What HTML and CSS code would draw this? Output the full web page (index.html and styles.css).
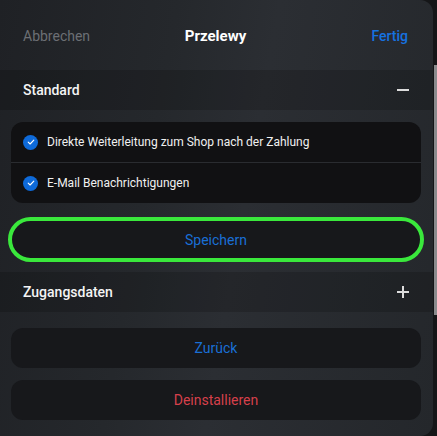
FILE: index.html
```html
<!DOCTYPE html>
<html lang="de">
<head>
    <meta charset="UTF-8">
    <meta name="viewport" content="width=device-width, initial-scale=1.0">
    <title>Przelewy</title>
    <link rel="stylesheet" href="styles.css">
</head>
<body>

    <div class="screen">
        <div class="sheet">
            <header class="sheet-header">
                <a href="#" class="link-cancel">Abbrechen</a>
                <h1>Przelewy</h1>
                <a href="#" class="link-done">Fertig</a>
            </header>

            <div class="group-head">
                <span>Standard</span>
                <span class="toggle minus"></span>
            </div>

            <div class="group-body">
                <div class="options">
                    <label class="option">
                        <span class="check">
                            <svg viewBox="0 0 16 16" width="16" height="16"><path d="M4.8 8.2l2.2 2.1 4.2-4.4" fill="none" stroke="#fff" stroke-width="1.3" stroke-linecap="round" stroke-linejoin="round"/></svg>
                        </span>
                        Direkte Weiterleitung zum Shop nach der Zahlung
                    </label>
                    <label class="option">
                        <span class="check">
                            <svg viewBox="0 0 16 16" width="16" height="16"><path d="M4.8 8.2l2.2 2.1 4.2-4.4" fill="none" stroke="#fff" stroke-width="1.3" stroke-linecap="round" stroke-linejoin="round"/></svg>
                        </span>
                        E-Mail Benachrichtigungen
                    </label>
                </div>
                <button class="btn btn-save">Speichern</button>
            </div>

            <div class="group-head">
                <span>Zugangsdaten</span>
                <span class="toggle plus"></span>
            </div>

            <div class="actions">
                <button class="btn btn-back">Zurück</button>
                <button class="btn btn-remove">Deinstallieren</button>
            </div>
        </div>

        <div class="rail"><div class="thumb"></div></div>
    </div>

</body>
</html>
```

FILE: styles.css
```css
body {
    font-family: Roboto, "Liberation Sans", sans-serif;
    margin: 0;
    padding: 0;
    background-color: #151618;
    color: #f2f2f2;
}

.screen {
    display: flex;
    height: 436px;
    overflow: hidden;
}

.sheet {
    width: 433px;
    height: 436px;
    flex-shrink: 0;
    border-radius: 0 13px 13px 0;
    background: linear-gradient(100deg, #1f2125 0%, #25282c 35%, #2b2e33 55%, #24272b 100%);
    overflow: hidden;
}

.sheet-header {
    height: 70px;
    display: grid;
    grid-template-columns: 1fr auto 1fr;
    align-items: center;
    padding: 0 25px 0 23px;
}

.sheet-header h1 {
    margin: 0;
    font-size: 15px;
    font-weight: 700;
    color: #fff;
    padding-top: 1px;
}

.sheet-header a {
    text-decoration: none;
    font-size: 14px;
    padding-top: 1px;
}

.link-cancel {
    color: #6c6f74;
}

.link-done {
    color: #1672e0;
    justify-self: end;
    font-weight: 500;
}

.group-head {
    height: 40px;
    display: flex;
    align-items: center;
    justify-content: space-between;
    padding: 0 24px 0 23px;
    background-color: rgba(0, 0, 0, 0.16);
    font-size: 14px;
    font-weight: 500;
    color: #f4f4f4;
}

.toggle {
    position: relative;
    width: 12px;
    height: 12px;
}

.toggle::before,
.toggle::after {
    content: "";
    position: absolute;
    background-color: #dcdcdc;
}

.toggle::before {
    left: 0;
    top: 5px;
    width: 12px;
    height: 2px;
}

.plus::after {
    left: 5px;
    top: 0;
    width: 2px;
    height: 12px;
}

.group-body {
    padding: 12px 12px 13px 11px;
}

.options {
    background-color: #111113;
    border-radius: 12px;
    margin-bottom: 17px;
}

.option {
    height: 40px;
    display: flex;
    align-items: center;
    gap: 9px;
    padding-left: 12px;
    font-size: 12px;
    color: #f0f0f0;
}

.option + .option {
    border-top: 1px solid #2a2c30;
}

.check {
    width: 15px;
    height: 15px;
    border-radius: 50%;
    background-color: #0e6ad9;
    display: flex;
    align-items: center;
    justify-content: center;
}

.check svg {
    width: 14px;
    height: 14px;
}

.btn {
    display: block;
    width: 100%;
    border: none;
    font-family: inherit;
    font-size: 14px;
    background-color: #17181b;
    cursor: pointer;
}

.btn-save {
    height: 39px;
    border-radius: 22px;
    color: #1a6fd6;
    outline: 4px solid #3ae83c;
    outline-offset: -1px;
}

.actions {
    padding: 16px 12px 0 11px;
    display: flex;
    flex-direction: column;
    gap: 12px;
}

.btn-back,
.btn-remove {
    height: 40px;
    border-radius: 12px;
}

.btn-back {
    color: #1a6fd6;
}

.btn-remove {
    color: #d6404b;
}

.rail {
    width: 4px;
    padding-left: 1px;
}

.thumb {
    margin-top: 65px;
    width: 3px;
    height: 250px;
    background-color: #8a8b8d;
}
```
